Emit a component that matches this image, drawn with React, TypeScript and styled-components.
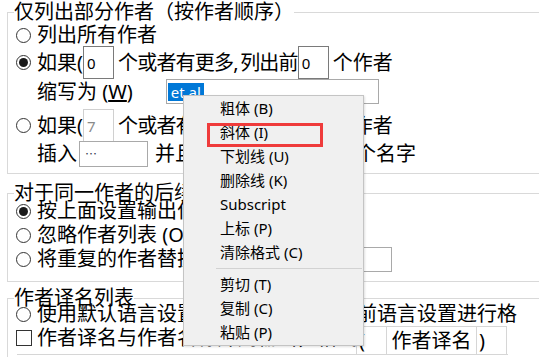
import React from 'react';
import styled, { createGlobalStyle } from 'styled-components';

const Global = createGlobalStyle`
  html, body { margin: 0; padding: 0; background: #ffffff; overflow: hidden; }
  body { font-family: "Noto Sans", "Noto Sans CJK SC", sans-serif; color: #000; }
`;

const Page = styled.div`
  position: relative;
  width: 539px;
  height: 357px;
  overflow: hidden;
  font-size: 20px;
`;

const Group = styled.fieldset<{ $mt: number; $pb: number }>`
  margin: ${p => p.$mt}px 0 0 7px;
  padding: 0 0 ${p => p.$pb}px 8px;
  border: 1px solid #d9d9d9;
  width: 580px;
  min-width: 0;
  box-sizing: border-box;
`;

const Legend = styled.legend<{ $lh: number }>`
  padding: 0;
  margin-left: -2px;
  line-height: ${p => p.$lh}px;
  font-size: 20px;
  white-space: nowrap;
`;

const Row = styled.div<{ $h: number; $mt?: number; $indent?: number }>`
  display: flex;
  align-items: center;
  height: ${p => p.$h}px;
  margin-top: ${p => p.$mt ?? 0}px;
  padding-left: ${p => p.$indent ?? 0}px;
  white-space: nowrap;
  line-height: 24px;
`;

const Radio = styled.span<{ $checked?: boolean }>`
  flex: none;
  width: 15px;
  height: 15px;
  box-sizing: border-box;
  border: 1px solid #333;
  border-radius: 50%;
  display: inline-flex;
  align-items: center;
  justify-content: center;
  margin-right: 6px;
  background: #fff;
  &::after {
    content: '';
    width: 9px;
    height: 9px;
    border-radius: 50%;
    background: #1a1a1a;
    display: ${p => (p.$checked ? 'block' : 'none')};
  }
`;

const Check = styled.span`
  flex: none;
  width: 16px;
  height: 16px;
  box-sizing: border-box;
  border: 1px solid #333;
  margin-right: 5px;
  background: #fff;
`;

const Text = styled.span<{ $ml?: number; $mr?: number; $tight?: boolean }>`
  flex: none;
  margin-left: ${p => p.$ml ?? 0}px;
  margin-right: ${p => p.$mr ?? 0}px;
  ${p => (p.$tight ? 'letter-spacing: -0.8px; word-spacing: -2px;' : '')}
`;

const Clip = styled.span<{ $w: number }>`
  flex: none;
  display: block;
  width: ${p => p.$w}px;
  height: 30px;
  line-height: 30px;
  overflow: hidden;
`;

const Box = styled.span<{ $w: number; $h: number; $ml?: number; $tone?: 'dark' | 'light' | 'mid' }>`
  flex: none;
  display: inline-flex;
  align-items: center;
  box-sizing: border-box;
  width: ${p => p.$w}px;
  height: ${p => p.$h}px;
  margin-left: ${p => p.$ml ?? 0}px;
  border: 1px solid
    ${p => (p.$tone === 'light' ? '#d0d0d0' : p.$tone === 'mid' ? '#a9a9a9' : '#7a7a7a')};
  padding-left: 3px;
  font-size: 15px;
  line-height: 18px;
  color: ${p => (p.$tone === 'light' ? '#8a8a8a' : '#000')};
  background: #fff;
`;

const Selected = styled.span`
  background: #0078d7;
  color: #fff;
  padding: 0 3px;
  margin-left: -2px;
  line-height: 18px;
`;

const Dots = styled.span`
  font-family: "Noto Sans CJK SC", sans-serif;
  font-size: 12px;
  color: #2e3a4e;
  margin-left: 2px;
`;

const TableRow = styled.div`
  display: flex;
  height: 28px;
  width: 491px;
  margin-left: 1px;
  border-bottom: 1px solid #d6d6d6;
  box-sizing: content-box;
  white-space: nowrap;
`;

const CheckWrap = styled.div`
  display: flex;
  align-items: center;
  margin-left: -1px;
  padding-bottom: 4px;
`;

const Cell = styled.div<{ $w: number; $center?: boolean }>`
  flex: none;
  width: ${p => p.$w}px;
  height: 28px;
  box-sizing: border-box;
  border-top: 1px solid #d6d6d6;
  border-left: 1px solid #d6d6d6;
  display: flex;
  align-items: center;
  justify-content: ${p => (p.$center ? 'center' : 'flex-start')};
  padding-left: ${p => (p.$center ? 0 : 2)}px;
  line-height: 24px;
  &:last-child { border-right: 1px solid #d6d6d6; }
`;

const Menu = styled.div`
  position: absolute;
  z-index: 2;
  left: 183px;
  top: 95px;
  width: 181px;
  height: 251px;
  box-sizing: border-box;
  background: #f0f0f0;
  border: 1px solid #c4c4c4;
  box-shadow: 1px 1px 2px rgba(0, 0, 0, 0.12);
  font-size: 15px;
  display: flex;
  flex-direction: column;
`;

const Item = styled.div`
  flex: none;
  height: 24px;
  display: flex;
  align-items: center;
  padding-left: 36px;
  line-height: 20px;
  white-space: nowrap;
`;

const Separator = styled.div`
  flex: none;
  height: 8px;
  margin: 0 1px 0 32px;
  display: flex;
  align-items: center;
  &::before {
    content: '';
    flex: 1;
    height: 1px;
    background: #d2d2d2;
  }
`;

const Highlight = styled.div`
  position: absolute;
  left: 23px;
  top: 27px;
  width: 116px;
  height: 24px;
  box-sizing: border-box;
  border: 3px solid #ef3b3b;
`;

const topItems = ['粗体 (B)', '斜体 (I)', '下划线 (U)', '删除线 (K)', 'Subscript', '上标 (P)', '清除格式 (C)'];
const bottomItems = ['剪切 (T)', '复制 (C)', '粘贴 (P)'];

export default function App() {
  return (
    <>
      <Global />
      <Page>
        <Group $mt={0} $pb={6}>
          <Legend $lh={24}>仅列出部分作者（按作者顺序）</Legend>
          <Row $h={22}>
            <Radio />
            <Text>列出所有作者</Text>
          </Row>
          <Row $h={33}>
            <Radio $checked />
            <Text>如果(</Text>
            <Box $w={31} $h={33}>0</Box>
            <Text $ml={4} $tight>个或者有更多, 列出前</Text>
            <Box $w={31} $h={33}>0</Box>
            <Text $ml={4}>个作者</Text>
          </Row>
          <Row $h={25} $indent={21}>
            <Text $mr={33}>
              缩写为 (<u>W</u>)
            </Text>
            <Box $w={213} $h={25} $tone="mid">
              <Selected>et al</Selected>
            </Box>
          </Row>
          <Row $h={33} $mt={5}>
            <Radio />
            <Text>如果(</Text>
            <Box $w={31} $h={33} $tone="light">7</Box>
            <Text $ml={4} $tight>个或者有更多, 列出前</Text>
            <Box $w={31} $h={33} $tone="light">3</Box>
            <Text $ml={4}>个作者</Text>
          </Row>
          <Row $h={26} $mt={-1} $indent={21}>
            <Text>插入</Text>
            <Box $w={69} $h={26} $ml={2} $tone="mid">
              <Dots>…</Dots>
            </Box>
            <Text $ml={7}>并且保留最后</Text>
            <Box $w={74} $h={26} $ml={3} $tone="mid">1</Box>
            <Text $ml={4}>个名字</Text>
          </Row>
        </Group>

        <Group $mt={10} $pb={10}>
          <Legend $lh={18}>对于同一作者的后续引文</Legend>
          <Row $h={24} $mt={-3}>
            <Radio $checked />
            <Text>按上面设置输出作者列表</Text>
          </Row>
          <Row $h={24}>
            <Radio />
            <Text>忽略作者列表 (O)</Text>
          </Row>
          <Row $h={24}>
            <Radio />
            <Text>将重复的作者替换为</Text>
            <Box $w={171} $h={25} $ml={4} $tone="mid" />
          </Row>
        </Group>

        <Group $mt={4} $pb={10}>
          <Legend $lh={24}>作者译名列表</Legend>
          <Row $h={24} $mt={-8}>
            <Radio />
            <Clip $w={480}>使用默认语言设置（即按照文献的当前语言设置进行格式化）</Clip>
          </Row>
          <TableRow>
            <CheckWrap>
              <Check />
              <Clip $w={319}>作者译名与作者名称并列输出，格式为</Clip>
            </CheckWrap>
            <Cell $w={30}>(</Cell>
            <Cell $w={90} $center>作者译名</Cell>
            <Cell $w={31}>)</Cell>
          </TableRow>
        </Group>

        <Menu>
          {topItems.map(t => (
            <Item key={t}>{t}</Item>
          ))}
          <Separator />
          {bottomItems.map(t => (
            <Item key={t}>{t}</Item>
          ))}
          <Highlight />
        </Menu>
      </Page>
    </>
  );
}
